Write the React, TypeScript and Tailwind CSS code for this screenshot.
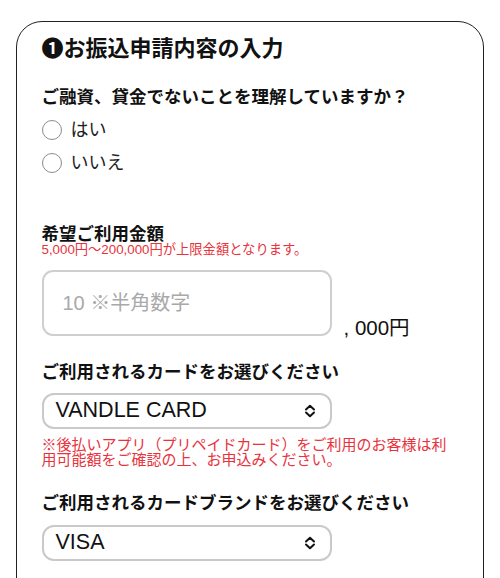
import { useState } from "react";

function Chevrons() {
  return (
    <svg width="12" height="14" viewBox="0 0 12 14" fill="none" className="shrink-0">
      <path d="M2 5.5 L6 1.8 L10 5.5" stroke="#111" strokeWidth="2" strokeLinecap="round" strokeLinejoin="round" />
      <path d="M2 8.5 L6 12.2 L10 8.5" stroke="#111" strokeWidth="2" strokeLinecap="round" strokeLinejoin="round" />
    </svg>
  );
}

function SelectBox({ value }: { value: string }) {
  return (
    <div className="flex h-[36px] w-[290px] items-center justify-between rounded-[12px] border-2 border-[#c9c9c9] pl-[12px] pr-[14px]">
      <span className="text-[21.5px] leading-none text-[#111]">{value}</span>
      <Chevrons />
    </div>
  );
}

function Radio({ label, checked, onClick }: { label: string; checked: boolean; onClick: () => void }) {
  return (
    <button type="button" onClick={onClick} className="flex h-[28px] items-center gap-[9px]">
      <span className="flex h-[20px] w-[20px] items-center justify-center rounded-full border-[1.5px] border-[#8c8c8c]">
        {checked && <span className="h-[9px] w-[9px] rounded-full bg-[#555]" />}
      </span>
      <span className="text-[18px] leading-none text-[#222]">{label}</span>
    </button>
  );
}

export default function App() {
  const [answer, setAnswer] = useState<string | null>(null);

  return (
    <div className="min-h-[578px] overflow-hidden bg-white pt-[21px] font-['Liberation_Sans','Noto_Sans_CJK_JP',sans-serif] text-[#111]">
      <div className="mx-[16px] h-[700px] rounded-[26px] border-[1.5px] border-[#222] px-[24.5px] pt-[12.5px]">
        <h1 className="text-[22px] font-bold leading-[28px]">❶お振込申請内容の入力</h1>

        <p className="mt-[21px] text-[17.5px] font-bold leading-[26px]">
          ご融資、貸金でないことを理解していますか？
        </p>
        <div className="mt-[6px] flex flex-col gap-[5px]">
          <Radio label="はい" checked={answer === "yes"} onClick={() => setAnswer("yes")} />
          <Radio label="いいえ" checked={answer === "no"} onClick={() => setAnswer("no")} />
        </div>

        <p className="mt-[48px] text-[17.5px] font-bold leading-[18px]">希望ご利用金額</p>
        <p className="text-[13.3px] leading-[14px] text-[#e8323c]">5,000円〜200,000円が上限金額となります。</p>

        <div className="mt-[13px] flex items-end gap-[12px]">
          <div className="flex h-[66px] w-[290px] items-center rounded-[11px] border-2 border-[#cfcfcf] px-[19px]">
            <span className="text-[20px] text-[#a9a9a9]">10 ※半角数字</span>
          </div>
          <span className="text-[20.5px] leading-[16px]">, 000円</span>
        </div>

        <p className="mt-[23px] text-[17.5px] font-bold leading-[26px]">ご利用されるカードをお選びください</p>
        <div className="mt-[8px]">
          <SelectBox value="VANDLE CARD" />
        </div>
        <p className="mt-[8.5px] text-[15px] leading-[15px] text-[#e8323c]">
          ※後払いアプリ（プリペイドカード）をご利用のお客様は利用可能額をご確認の上、お申込みください。
        </p>

        <p className="mt-[22.5px] text-[17.5px] font-bold leading-[26px]">
          ご利用されるカードブランドをお選びください
        </p>
        <div className="mt-[9px]">
          <SelectBox value="VISA" />
        </div>
      </div>
    </div>
  );
}
